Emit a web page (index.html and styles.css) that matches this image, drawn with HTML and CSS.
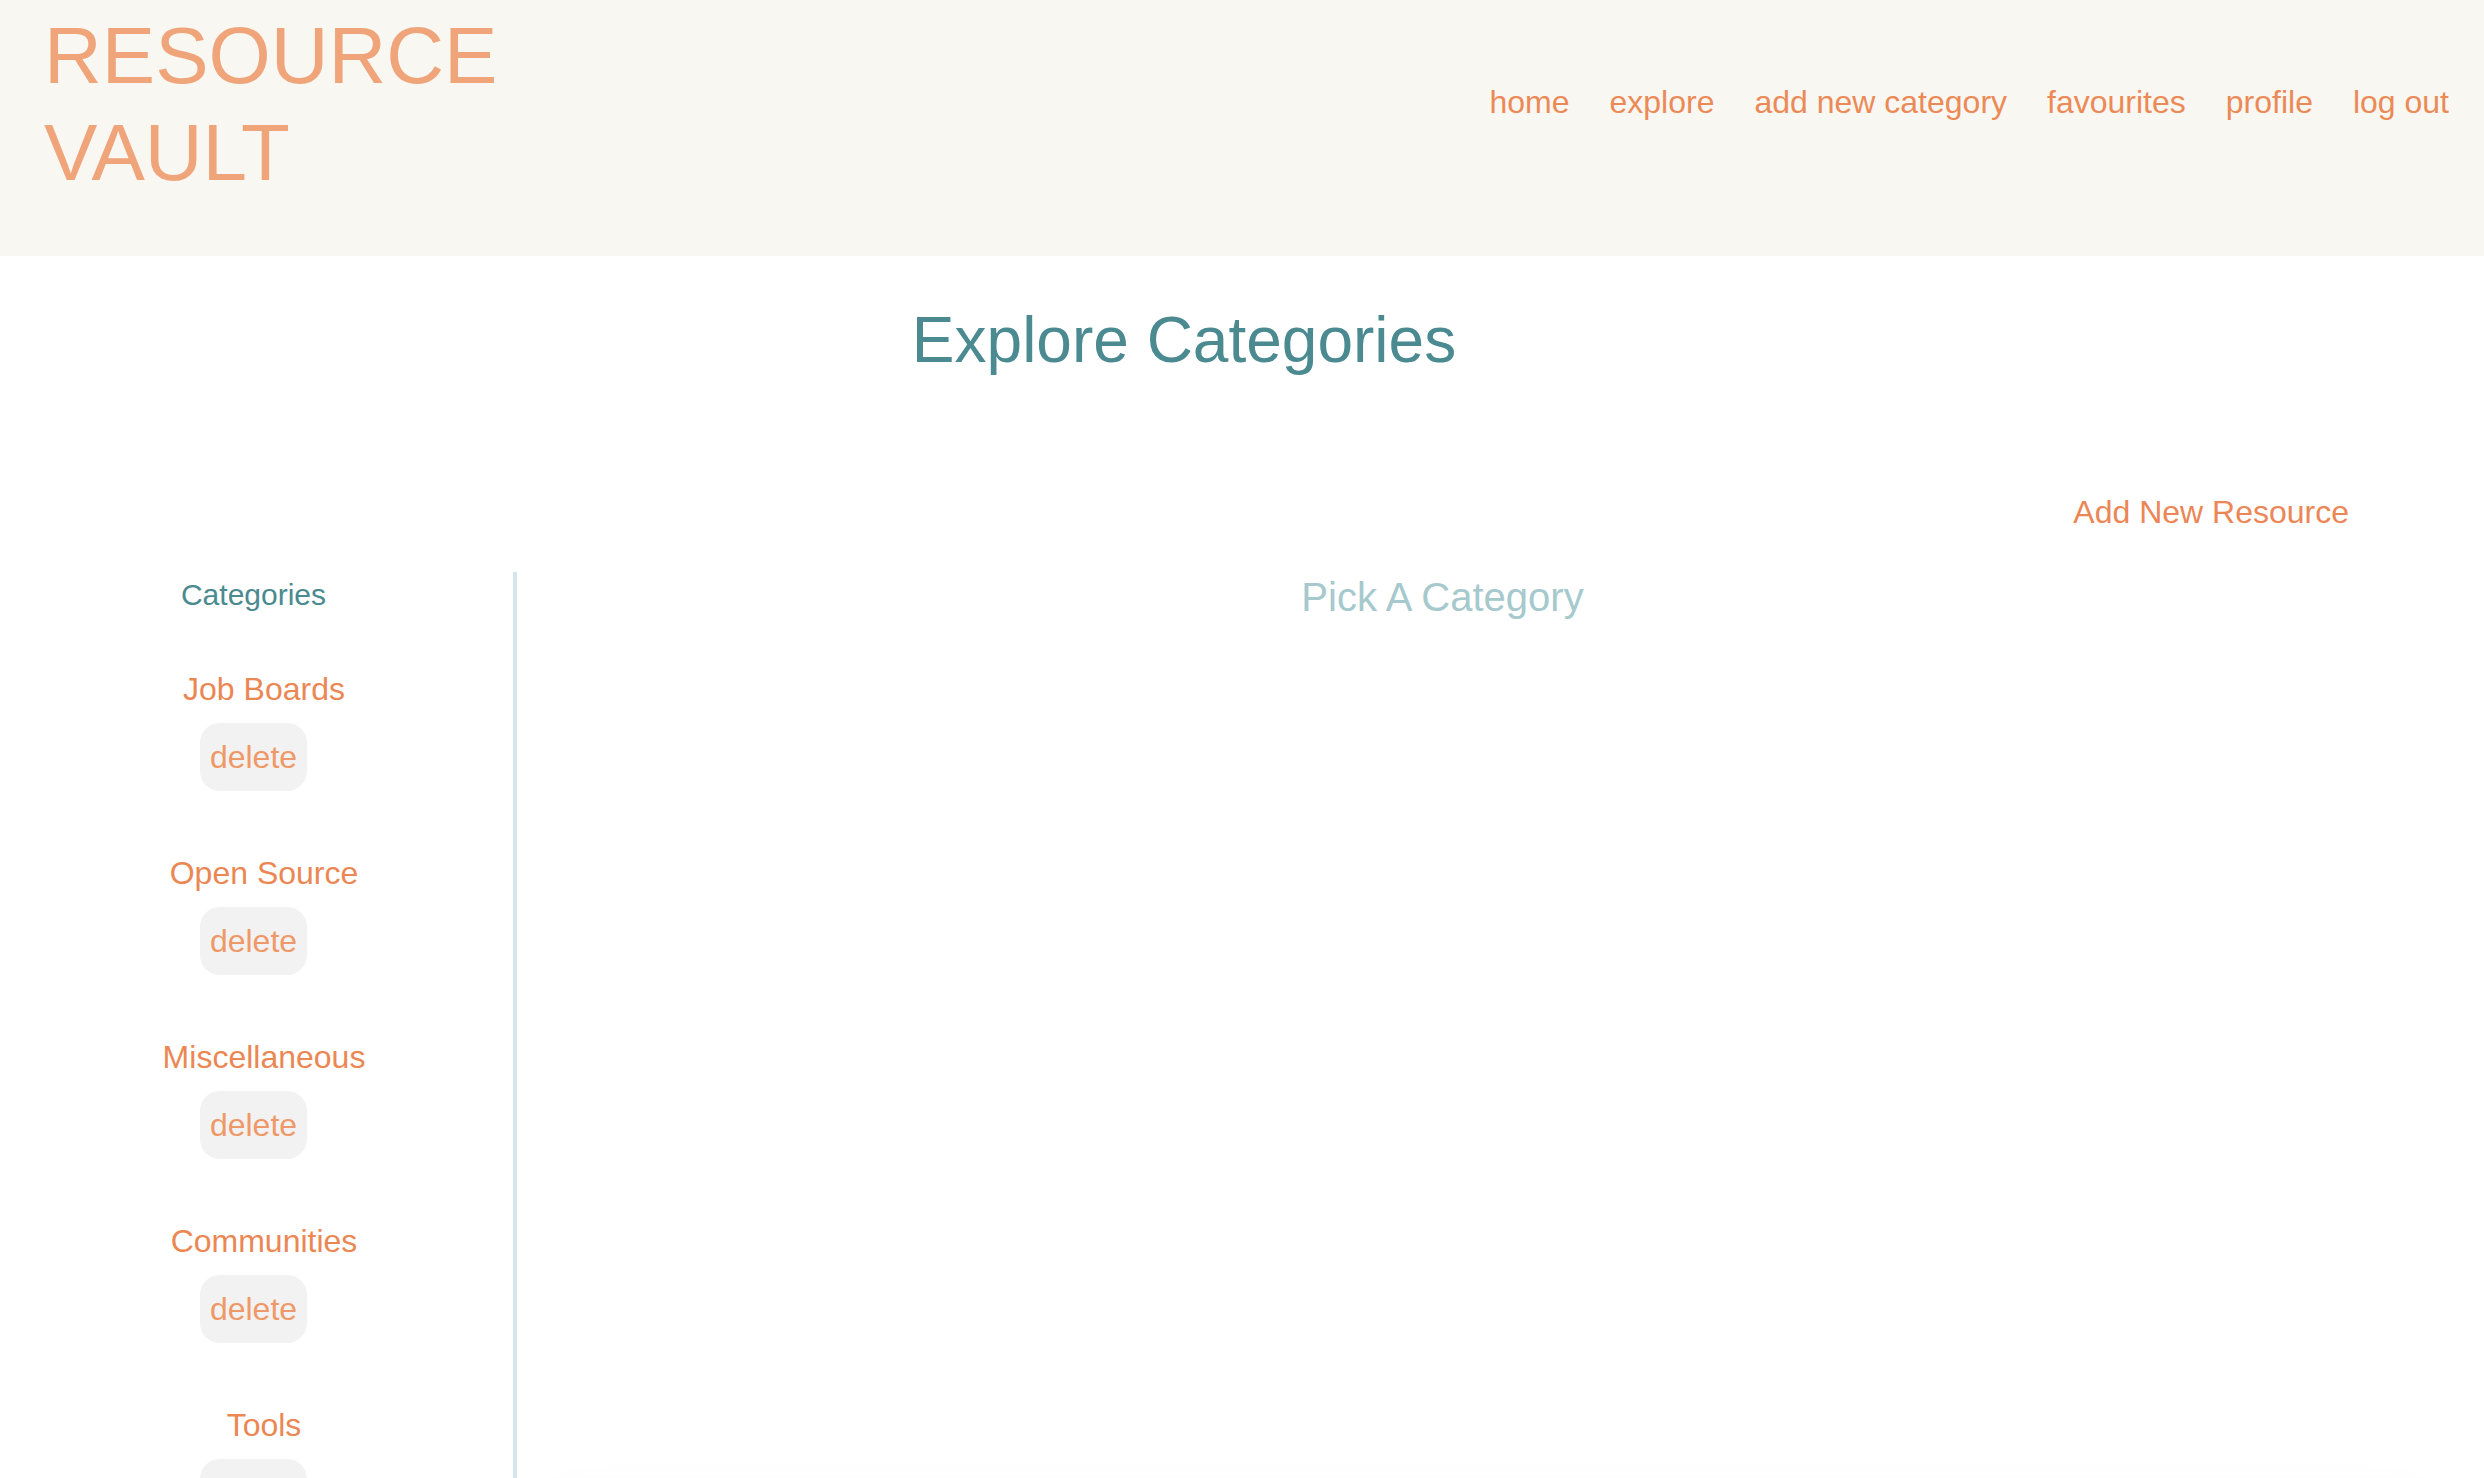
FILE: index.html
```html
<!DOCTYPE html>
<html lang="en">
<head>
<meta charset="utf-8">
<title>Resource Vault - Explore Categories</title>
<link rel="stylesheet" href="styles.css">
</head>
<body>
<header class="topbar">
  <h1 class="brand">RESOURCE VAULT</h1>
  <nav class="nav">
    <a class="nav-link" href="#">home</a>
    <a class="nav-link" href="#">explore</a>
    <a class="nav-link" href="#">add new category</a>
    <a class="nav-link" href="#">favourites</a>
    <a class="nav-link" href="#">profile</a>
    <a class="nav-link" href="#">log out</a>
  </nav>
</header>
<div class="page">
  <h2 class="page-title">Explore Categories</h2>
  <div class="actions">
    <a class="add-resource" href="#">Add New Resource</a>
  </div>
  <div class="layout">
    <aside class="sidebar">
      <h3 class="sidebar-title">Categories</h3>
      <ul class="cat-list">
        <li class="cat"><a class="cat-name" href="#">Job Boards</a><button class="btn-delete">delete</button></li>
        <li class="cat"><a class="cat-name" href="#">Open Source</a><button class="btn-delete">delete</button></li>
        <li class="cat"><a class="cat-name" href="#">Miscellaneous</a><button class="btn-delete">delete</button></li>
        <li class="cat"><a class="cat-name" href="#">Communities</a><button class="btn-delete">delete</button></li>
        <li class="cat"><a class="cat-name" href="#">Tools</a><button class="btn-delete">delete</button></li>
      </ul>
    </aside>
    <main class="content">
      <h3 class="content-title">Pick A Category</h3>
      <div class="resource-card"></div>
    </main>
  </div>
</div>
</body>
</html>
```
FILE: styles.css
```css
html, body {
  margin: 0;
  padding: 0;
  background: #ffffff;
}

body {
  font-family: "Liberation Sans", Arial, Helvetica, sans-serif;
  overflow: hidden;
}

a {
  text-decoration: none;
}

.topbar {
  display: flex;
  justify-content: space-between;
  align-items: flex-start;
  height: 256px;
  box-sizing: border-box;
  padding: 7px 35px 0 44px;
  background: #f9f7f2;
}

.brand {
  margin: 0;
  width: 560px;
  font-size: 80px;
  line-height: 97px;
  font-weight: normal;
  color: #efa47a;
}

.nav {
  display: flex;
  gap: 40px;
  margin-top: 77px;
}

.nav-link {
  font-size: 32px;
  line-height: 1.15;
  color: #ec8a57;
}

.page {
  padding-right: 116px;
}

.page-title {
  margin: 48px 0 0;
  text-align: center;
  font-size: 64px;
  line-height: 1.15;
  font-weight: normal;
  color: #4a8a90;
}

.actions {
  display: flex;
  justify-content: flex-end;
  margin-top: 116px;
  padding-right: 19px;
}

.add-resource {
  font-size: 32px;
  line-height: 1.15;
  color: #ec8656;
}

.layout {
  display: flex;
  align-items: flex-start;
  margin-top: 42px;
}

.sidebar {
  width: 507px;
  flex: none;
  padding-right: 6px;
  border-right: 4px solid #d4e6ea;
  display: flex;
  flex-direction: column;
  align-items: center;
}

.sidebar-title {
  margin: 6px 0 0;
  font-size: 30px;
  line-height: 1.15;
  font-weight: normal;
  color: #4a8a90;
}

.cat-list {
  list-style: none;
  margin: 58px 0 0;
  padding: 0;
  display: flex;
  flex-direction: column;
  align-items: center;
}

.cat {
  display: flex;
  flex-direction: column;
  align-items: center;
  margin-bottom: 63.5px;
}

.cat-name {
  padding-left: 21px;
  font-size: 32px;
  line-height: 1.15;
  color: #eb8753;
}

.btn-delete {
  margin-top: 15.7px;
  padding: 15.6px 10px;
  border: 0;
  border-radius: 20px;
  background: #f2f2f2;
  font-family: "Liberation Sans", Arial, Helvetica, sans-serif;
  font-size: 32px;
  line-height: 1.15;
  color: #ef9868;
}

.content {
  flex: 1;
}

.content-title {
  margin: 2px 0 0;
  text-align: center;
  font-size: 40px;
  line-height: 1.15;
  font-weight: normal;
  color: #a6c9cd;
}

.resource-card {
  height: 400px;
  margin: 880px -60px 0 30px;
  border-radius: 30px;
  background: #ffffff;
  box-shadow: 0 0 50px rgba(0, 0, 0, 0.05);
}
```
